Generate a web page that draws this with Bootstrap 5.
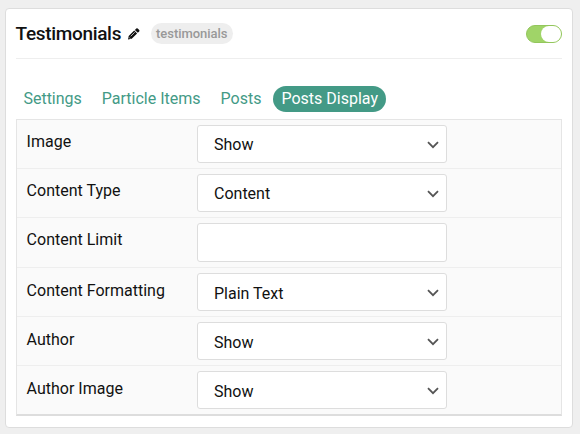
<!DOCTYPE html>
<html lang="en">
<head>
<meta charset="utf-8">
<meta name="viewport" content="width=device-width, initial-scale=1">
<title>Testimonials</title>
<link href="https://cdn.jsdelivr.net/npm/bootstrap@5.3.0/dist/css/bootstrap.min.css" rel="stylesheet">
<style>
body{background:#efefef;font-family:Roboto,"Liberation Sans",sans-serif;font-size:16px;color:#111;overflow:hidden}
.panel-card{width:568px;height:420px;margin:8px 0 0 5px;padding:0 10px;border:1px solid #ddd;border-radius:4px}
.panel-head{height:50px;border-bottom:1px solid #eee}
.panel-title{font-size:19px;font-weight:500;line-height:24px;letter-spacing:-.33px;text-indent:-.4px}
.edit-icon{margin-left:7px}
.type-pill{background:#eee;color:#999;font-size:13px;font-weight:500;height:21px;line-height:21px;padding:0 6px 0 5px;margin-left:11px;letter-spacing:-.05px}
.toggle{width:36px;height:18px;background:#a0d468;border:1px solid #93c65c}
.toggle span{width:20px;height:16px;background:#fff}
.tab-row{margin:27px 0 0 -.6px;height:33px}
.tab-row .nav-link{color:#439a86;padding:0 8px;line-height:26px;height:26px;margin-right:4px}
.tab-row .nav-link.active{background:#439a86;color:#fff}
.settings{border:1px solid #e5e5e5;border-bottom:2px solid #ddd;background:#fafafa}
.setting{height:49px;padding:5px 0 0 10px;border-bottom:1px solid #eee}
.setting.tall{height:50px}
.setting:last-child{height:48px;border-bottom:0}
.setting label{width:170px;line-height:24px;padding-top:5px;text-indent:-.4px}
.tall ~ .setting label{padding-top:6px}
.field{width:250px;height:38px;background:#fff;border:1px solid #ddd;border-radius:3px;padding:1px 7px 0 16px;line-height:24px}
.field svg{margin-top:1px}
.tall ~ .setting .field{padding-top:3px}
.tall ~ .setting .field svg{margin-top:-1px}
.tall .field{height:39px}
</style>
</head>
<body>
<main class="panel-card bg-white">
  <header class="panel-head d-flex align-items-center">
    <h1 class="panel-title mb-0">Testimonials</h1>
    <svg class="edit-icon" width="12" height="12" viewBox="0 0 12 12" aria-hidden="true"><path fill="#111" d="M0 11.5l.7-3.6L6.2 2.6l2.9 2.9-5.4 5.3zM6.9 1.9L8.3.6q.7-.6 1.4 0l1.5 1.5q.6.7 0 1.3L9.8 4.8z"/><path stroke="#fff" stroke-width=".7" d="M2.7 8.3l4-4M1.1 9.4l1.2 1.2" fill="none"/></svg>
    <span class="type-pill rounded-pill">testimonials</span>
    <div class="toggle rounded-pill ms-auto d-flex justify-content-end"><span class="rounded-pill"></span></div>
  </header>
  <nav class="tab-row nav nav-pills">
    <a class="nav-link" href="#">Settings</a>
    <a class="nav-link" href="#">Particle Items</a>
    <a class="nav-link" href="#">Posts</a>
    <a class="nav-link active rounded-pill" href="#">Posts Display</a>
  </nav>
  <section class="settings">
    <div class="setting d-flex align-items-start"><label>Image</label><div class="field d-flex align-items-center justify-content-between">Show<svg width="12" height="8" viewBox="0 0 12 8"><path d="M1 1.2l5 5 5-5" fill="none" stroke="#555" stroke-width="1.8"/></svg></div></div>
    <div class="setting d-flex align-items-start"><label>Content Type</label><div class="field d-flex align-items-center justify-content-between">Content<svg width="12" height="8" viewBox="0 0 12 8"><path d="M1 1.2l5 5 5-5" fill="none" stroke="#555" stroke-width="1.8"/></svg></div></div>
    <div class="setting tall d-flex align-items-start"><label for="limit">Content Limit</label><input id="limit" class="field" type="text"></div>
    <div class="setting d-flex align-items-start"><label>Content Formatting</label><div class="field d-flex align-items-center justify-content-between">Plain Text<svg width="12" height="8" viewBox="0 0 12 8"><path d="M1 1.2l5 5 5-5" fill="none" stroke="#555" stroke-width="1.8"/></svg></div></div>
    <div class="setting d-flex align-items-start"><label>Author</label><div class="field d-flex align-items-center justify-content-between">Show<svg width="12" height="8" viewBox="0 0 12 8"><path d="M1 1.2l5 5 5-5" fill="none" stroke="#555" stroke-width="1.8"/></svg></div></div>
    <div class="setting d-flex align-items-start"><label>Author Image</label><div class="field d-flex align-items-center justify-content-between">Show<svg width="12" height="8" viewBox="0 0 12 8"><path d="M1 1.2l5 5 5-5" fill="none" stroke="#555" stroke-width="1.8"/></svg></div></div>
  </section>
</main>
<script src="https://cdn.jsdelivr.net/npm/bootstrap@5.3.0/dist/js/bootstrap.bundle.min.js"></script>
</body>
</html>
